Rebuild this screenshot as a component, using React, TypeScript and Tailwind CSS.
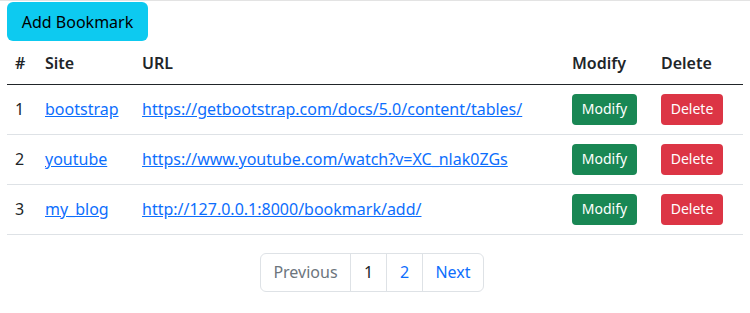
const bookmarks = [
  { id: 1, site: "bootstrap", url: "https://getbootstrap.com/docs/5.0/content/tables/" },
  { id: 2, site: "youtube", url: "https://www.youtube.com/watch?v=XC_nlak0ZGs" },
  { id: 3, site: "my_blog", url: "http://127.0.0.1:8000/bookmark/add/" },
];

export default function App() {
  return (
    <div className="w-[750px] h-[313px] bg-white border-t border-[#e3e3e3] px-[7px] pt-px text-[16px] text-[#212529] font-['Noto_Sans','Open_Sans',sans-serif] leading-6">
      <button className="h-[39px] w-[141px] rounded-[6px] bg-[#0dcaf0] text-black text-[16px]">
        Add Bookmark
      </button>

      <table className="w-[736px] table-fixed border-collapse mt-[2px]">
        <colgroup>
          <col className="w-[30px]" />
          <col className="w-[97px]" />
          <col className="w-[430px]" />
          <col className="w-[89px]" />
          <col className="w-[90px]" />
        </colgroup>
        <thead>
          {/* header row */}
          <tr className="h-[41px] border-b border-[#212529] font-semibold text-left">
            <th className="px-2 font-semibold">#</th>
            <th className="px-2 font-semibold">Site</th>
            <th className="px-2 font-semibold">URL</th>
            <th className="px-2 font-semibold">Modify</th>
            <th className="px-2 font-semibold">Delete</th>
          </tr>
        </thead>
        <tbody>
          {bookmarks.map((b) => (
            <tr key={b.id} className="h-[50px] border-b border-[#dee2e6]">
              <td className="px-2">{b.id}</td>
              <td className="px-2">
                <a href="#" className="text-[#0d6efd] underline whitespace-nowrap">{b.site}</a>
              </td>
              <td className="px-2">
                <a href="#" className="text-[#0d6efd] underline whitespace-nowrap">{b.url}</a>
              </td>
              <td className="px-2">
                <button className="h-[31px] w-[65px] rounded-[4px] bg-[#198754] text-white text-[14px]">
                  Modify
                </button>
              </td>
              <td className="px-2">
                <button className="h-[31px] w-[62px] rounded-[4px] bg-[#dc3545] text-white text-[14px]">
                  Delete
                </button>
              </td>
            </tr>
          ))}
        </tbody>
      </table>

      {/* pagination */}
      <div className="flex justify-center mt-[18px] pr-[6px]">
        <ul className="flex h-[39px] border border-[#dee2e6] rounded-[6px]">
          <li className="w-[90px] flex items-center justify-center text-[#6c757d] border-r border-[#dee2e6]">Previous</li>
          <li className="w-[36px] flex items-center justify-center text-[#212529] border-r border-[#dee2e6]">1</li>
          <li className="w-[36px] flex items-center justify-center text-[#0d6efd] border-r border-[#dee2e6]">2</li>
          <li className="w-[60px] flex items-center justify-center text-[#0d6efd]">Next</li>
        </ul>
      </div>
    </div>
  );
}
